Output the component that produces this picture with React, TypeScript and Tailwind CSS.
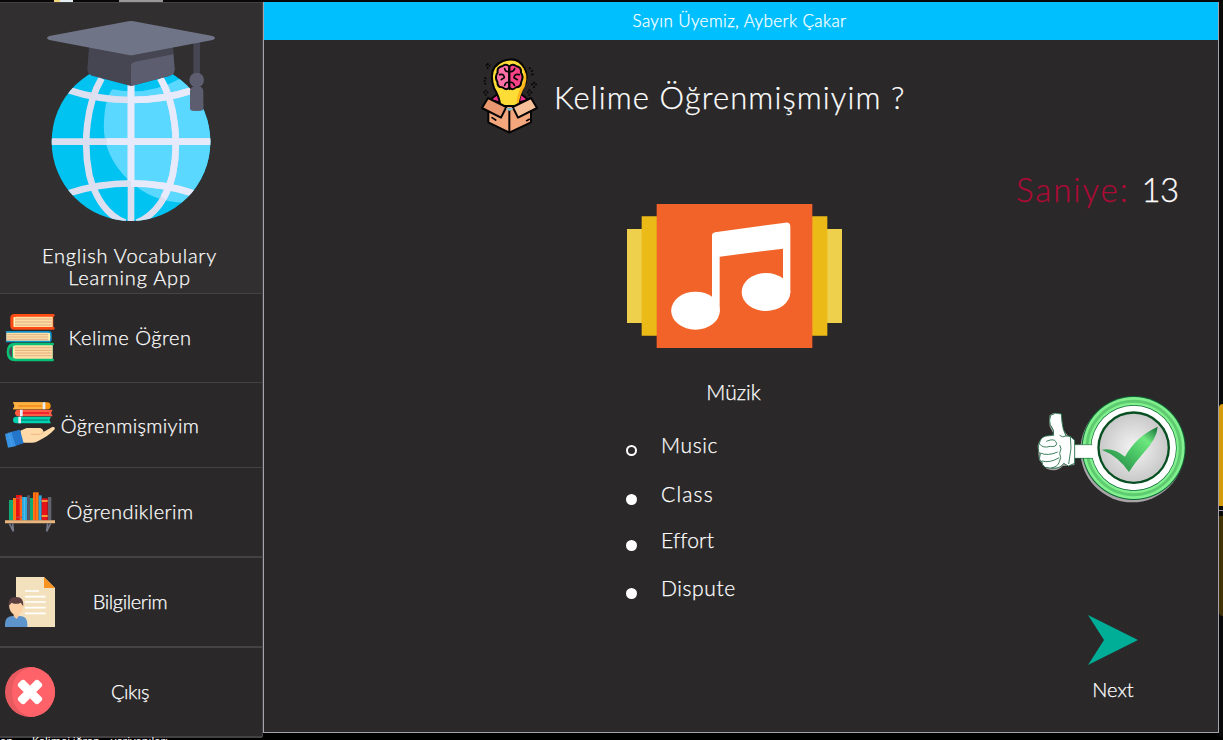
import React from 'react';

function GlobeLogo() {
  return (
    <svg viewBox="0 0 786 690" className="block h-[230px] w-[262px]">
      <defs>
        <clipPath id="globe"><circle cx="393" cy="425" r="238" /></clipPath>
      </defs>
      <circle cx="393" cy="425" r="238" fill="#00c3f2" />
      <g clipPath="url(#globe)">
        <path d="M337 268Q440 290 540 236L640 300V590L560 608Q460 610 385 540C325 480 308 420 312 365Q315 295 337 268Z" fill="#5ad8ff" />
        <g fill="none" stroke="#dcdff0" strokeWidth="20">
          <path d="M150 425H640M393 240V670" />
          <path d="M205 270Q295 300 393 300T580 270M205 580Q295 550 393 550T580 580" />
          <path d="M305 235C260 310 248 430 268 525C285 590 320 645 375 668M481 235C526 310 538 430 518 525C501 590 466 645 411 668" />
        </g>
        <g fill="none" stroke="#e6eafa" strokeWidth="20">
          <path d="M320 425H640M393 240V542M393 300Q491 300 580 270M393 550Q491 550 580 580M481 235C526 310 538 430 518 525Q505 570 490 594" />
        </g>
      </g>
      <path d="M267 140H519L524 208Q524 222 510 227L393 258L276 227Q262 222 262 208Z" fill="#464552" />
      <path d="M393 258V198Q393 188 405 185L520 163L524 208Q524 222 510 227Z" fill="#5d5d70" />
      <path d="M580 125H600V225H580Z" fill="#464552" />
      <path d="M148 108L385 64Q393 62 401 64L638 108Q652 114 638 120L401 165Q393 167 385 165L148 120Q134 114 148 108Z" fill="#707487" />
      <circle cx="590" cy="240" r="22" fill="#5d5d70" />
      <rect x="570" y="259" width="40" height="73" rx="14" fill="#5d5d70" />
      <path d="M570 310H610V324Q610 332 602 332H578Q570 332 570 324Z" fill="#5d5d70" />
    </svg>
  );
}

function BookStackIcon() {
  return (
    <svg viewBox="0 0 150 150" className="size-[50px] shrink-0">
      <g strokeWidth="8" strokeLinecap="round">
        <path d="M145 7H28Q20 7 20 15V38Q20 46 28 46H145" fill="#ff4b14" stroke="#ff4b14" />
        <path d="M143 11H34Q26 11 26 18V35Q26 42 34 42H143Z" fill="#ffdca3" />
        <path d="M4 56H132Q138 56 138 62V78Q138 86 132 86H4" fill="#0a91c9" stroke="#1193c8" strokeWidth="4" />
        <path d="M4 59H130Q136 60 136 71T130 83H4Z" fill="#ffe1ac" />
        <path d="M143 93H30Q9 93 9 117T30 141H143" fill="#08c177" stroke="#08c177" />
        <path d="M143 97H31Q24 100 24 117T31 137H143Z" fill="#ffdca3" />
      </g>
      <path d="M21 100V134Q12 127 12 117T21 100Z" fill="#4c4656" />
      <path d="M30 18H140M30 27H140M30 36H140M6 65H130M6 72H130M6 79H130M30 104H140M30 112H140M30 120H140M30 128H140" stroke="#d9a77c" strokeWidth="2.5" />
      <path d="M28 12V42M133 60V83M27 98V136" stroke="#fff3b8" strokeWidth="4" />
    </svg>
  );
}

function HandBooksIcon() {
  return (
    <svg viewBox="0 0 150 150" className="size-[50px] shrink-0">
      <path d="M24 7H127Q137 8 137 18T127 28H24L29 18Z" fill="#ff9811" />
      <path d="M24 7H112V28H24L29 18Z" fill="#ffb244" />
      <path d="M143 29H40Q30 30 30 39T40 49H143L138 39Z" fill="#ff5b45" />
      <path d="M24 60Q24 50 35 50H138L133 60L138 70H35Q24 70 24 60Z" fill="#00d1ae" />
      <path d="M40 18H110" stroke="#f08512" strokeWidth="4" />
      <path d="M52 39H132" stroke="#e80b24" strokeWidth="4" />
      <path d="M45 60H130" stroke="#038a80" strokeWidth="4" />
      <path d="M117 7V28M49 29V49M44 50V70" stroke="#e6edf4" strokeWidth="8" />
      <path d="M46 92L65 84H106Q115 87 115 96L142 81Q151 79 149 88Q130 109 101 122Q92 128 82 128H50Z" fill="#fddaa7" />
      <path d="M78 103H106Q115 102 115 94" fill="none" stroke="#f2b985" strokeWidth="3" />
      <path d="M0 102L21 95L34 138L9 143Z" fill="#3893e4" />
      <path d="M20 95L45 89L56 130L32 137Z" fill="#2476cb" />
      <path d="M11 98L22 140M2 117L17 112" stroke="#4aa5ef" strokeWidth="2" />
    </svg>
  );
}

function ShelfIcon() {
  return (
    <svg viewBox="0 0 150 150" className="size-[50px] shrink-0">
      <path d="M12 39H24V100H12Z" fill="#10a875" />
      <path d="M24 33H33V100H24Z" fill="#ff7813" />
      <path d="M33 24H51V100H33Z" fill="#e51218" />
      <path d="M44 28H51V100H44Z" fill="#ff6514" />
      <path d="M51 30H66V100H51Z" fill="#29a9df" />
      <path d="M58 30V100" stroke="#69cced" strokeWidth="2" />
      <path d="M66 25H75V100H66Z" fill="#515564" />
      <path d="M75 33H84V100H75Z" fill="#10a875" />
      <path d="M84 16H101V100H84Z" fill="#ff7813" />
      <path d="M91 19V100" stroke="#f04918" strokeWidth="3" />
      <path d="M101 25H110V100H101Z" fill="#29a9df" />
      <path d="M110 34H128V100H110Z" fill="#e51218" />
      <path d="M129 30H139V100H129Z" fill="#626471" />
      <path d="M110 42H128M110 87H128" stroke="#ffc33d" strokeWidth="4" />
      <path d="M34 34H50M34 91H50" stroke="#ba4553" strokeWidth="4" />
      <path d="M0 100H150V109H0Z" fill="#e9b57e" />
      <path d="M13 109L25 133L23 109M137 109L125 133L128 109" fill="none" stroke="#75778a" strokeWidth="5" />
    </svg>
  );
}

function ProfileIcon() {
  return (
    <svg viewBox="0 0 150 150" className="size-[50px] shrink-0">
      <path d="M33 0H117L150 33V150H33Z" fill="#f3e1bd" />
      <path d="M117 0L150 33H117Z" fill="#f7931e" />
      <path d="M60 42H102M60 59H122M60 75H122M60 92H122M60 109H122" stroke="#fff" strokeWidth="5" />
      <path d="M0 150V140Q0 117 24 117H44Q67 117 67 142V150Z" fill="#5e94cc" />
      <path d="M26 107H42V117L34 126L26 117Z" fill="#f8c79e" />
      <path d="M12 84Q13 63 34 63T55 84Q56 103 40 115H29Q12 104 12 84Z" fill="#fdd0a5" />
      <path d="M11 87Q8 59 34 60Q57 60 55 88L47 77Q34 84 20 77Z" fill="#5b3e40" />
    </svg>
  );
}

function ExitIcon() {
  return (
    <svg viewBox="0 0 150 150" className="size-[50px] shrink-0">
      <circle cx="75" cy="75" r="75" fill="#e65a60" />
      <path d="M75 0A75 75 0 0 1 75 150Q21 132 21 75T75 0Z" fill="#ff6268" />
      <path d="M47 47L103 103M103 47L47 103" stroke="#fff" strokeWidth="27" />
      <path d="M42 52L52 42M108 52L98 42M42 98L52 108M108 98L98 108" stroke="#fff" strokeWidth="7" strokeLinecap="round" />
    </svg>
  );
}

function IdeaBoxIcon() {
  return (
    <svg viewBox="0 0 195 246" className="h-[82px] w-[65px] shrink-0">
      <g stroke="#050505" strokeWidth="6" strokeLinejoin="round" strokeLinecap="round">
        <path d="M32 135L60 114L72 145ZM149 135L122 114L108 145Z" fill="#e8328c" />
        <path d="M28 160L91 150L156 160V202L91 233L28 202Z" fill="#f4a67c" />
        <path d="M91 162V231" />
        <path d="M64 153Q62 127 45 99Q24 37 72 18Q116 2 136 39Q151 67 133 99Q119 126 119 153Z" fill="#ffdd37" />
        <path d="M125 29Q148 62 125 98Q113 121 113 143L119 148Q122 121 138 94Q151 55 125 29Z" fill="#ffb51b" stroke="none" />
        <path d="M91 35Q82 25 71 33Q53 36 56 53Q46 65 55 80Q55 97 70 97Q83 108 91 97Z" fill="#ff70a7" />
        <path d="M91 35Q100 25 111 33Q128 36 126 53Q135 65 127 80Q126 97 111 97Q100 108 91 97Z" fill="#f94287" />
        <path d="M91 36V103M62 59Q75 55 76 68L67 74M121 59Q106 55 105 68L115 74M77 41Q79 52 91 49Q103 52 107 41M77 91Q79 80 91 82Q103 80 106 91" fill="none" strokeWidth="5" />
        <path d="M27 129L82 156L66 188L9 159Z" fill="#e99870" />
        <path d="M156 129L101 156L117 188L174 159Z" fill="#f8c098" />
        <path d="M39 188L50 195M143 197L151 193" strokeWidth="5" />
      </g>
      <path d="M80 160H104L91 168Z" fill="#7dcce5" />
      <path d="M26 24V30M20 31H25M29 32H34M26 36V42M165 80V86M156 88H162M168 88H174M165 93V99M151 103V108M144 112H149M154 112H160M151 116V122M20 104V109M13 112H18M23 112H28M20 116V122M16 68L22 71M14 77L20 79M16 87L21 85M150 41L155 38M156 50L162 46M157 60L164 57" stroke="#080808" strokeWidth="5" />
    </svg>
  );
}

function MusicPicture() {
  return (
    <svg viewBox="0 0 645 432" className="block h-[144px] w-[215px]">
      <path d="M0 75H645V357H0Z" fill="#efd04d" />
      <path d="M44 37H601V395H44Z" fill="#ebba16" />
      <path d="M89 0H556V432H89Z" fill="#f26329" />
      <g fill="#fff">
        <ellipse cx="205.500" cy="320" rx="73" ry="57" />
        <ellipse cx="417" cy="264" rx="73" ry="57" />
        <path d="M255 93Q255 87 264 85L475 56Q490 54 490 68V267H468V134L278 158V323H255Z" />
      </g>
    </svg>
  );
}

function CorrectBadge() {
  return (
    <svg viewBox="48 27 456 330" className="block h-[110px] w-[152px]">
      <defs>
        <linearGradient id="tick" x1="0" y1="1" x2="1" y2="0">
          <stop offset="0" stopColor="#17753b" />
          <stop offset=".5" stopColor="#4cc767" />
          <stop offset=".75" stopColor="#6ee77e" />
          <stop offset="1" stopColor="#0c6835" />
        </linearGradient>
        <radialGradient id="disc">
          <stop offset="0" stopColor="#f4f4f4" />
          <stop offset="1" stopColor="#c9c9c9" />
        </radialGradient>
      </defs>
      <circle cx="337" cy="196" r="156" fill="#aaa5a9" />
      <circle cx="341" cy="189" r="156" fill="#0d6935" />
      <circle cx="341" cy="189" r="153" fill="#82f08e" />
      <circle cx="341" cy="189" r="140" fill="none" stroke="#5ecb70" strokeWidth="9" />
      <circle cx="341" cy="189" r="129" fill="#0d6b38" />
      <circle cx="341" cy="189" r="127" fill="#fff" />
      <path d="M160 179H238V219H160Z" fill="#fff" />
      <path d="M165 179H217M165 220H217" stroke="#1b7340" strokeWidth="2" />
      <circle cx="341" cy="188" r="109" fill="#064f20" />
      <circle cx="341" cy="188" r="102" fill="url(#disc)" />
      <path d="M245 194Q281 187 315 215Q347 155 413 125Q411 161 371 203Q344 233 327 261Q294 213 245 194Z" fill="url(#tick)" />
      <path d="M89 124Q86 111 89 91Q107 77 124 90L130 136L148 157L163 167V240L128 243Q112 263 80 251L57 224L53 182Q57 158 86 152L101 148Z" fill="#aaa6aa" />
      <g fill="#fff" stroke="#17683d" strokeWidth="2.500">
        <path d="M101 151Q104 135 91 119Q86 108 92 91Q106 80 124 87Q125 115 130 133L138 153L151 154L164 166V235L145 243L131 235Q124 250 96 250L75 247Q65 239 66 231L58 222Q60 213 61 206Q54 203 55 190Q54 180 58 176Q61 151 89 152Z" />
        <path d="M58 176Q68 191 91 184Q108 187 110 176Q107 162 91 165L79 169M61 204Q83 214 113 201M66 228Q89 235 118 218M119 180Q127 190 119 205Q126 217 117 233Q111 247 94 248M151 155L153 190L146 237M119 151Q128 159 138 153" fill="none" />
      </g>
    </svg>
  );
}

const menu = [
  { label: 'Kelime Öğren', icon: <BookStackIcon />, row: 'h-[89px] border-b', text: 'pb-[2px] tracking-[0.5px]' },
  { label: 'Öğrenmişmiyim', icon: <HandBooksIcon />, row: 'h-[85px] border-b', text: 'tracking-[0.35px]' },
  { label: 'Öğrendiklerim', icon: <ShelfIcon />, row: 'h-[90px] border-b-2', text: 'pb-[2px] tracking-[0.45px]' },
  { label: 'Bilgilerim', icon: <ProfileIcon />, row: 'h-[90px] border-b-2', text: 'pb-[2px] tracking-[-0.4px]' },
  { label: 'Çıkış', icon: <ExitIcon />, row: 'h-[90px] border-b-2', text: 'pb-[2px] tracking-[-0.5px]' },
];

const options = [
  { label: 'Music', row: 'h-[49px]', dot: 'border-[2.5px] border-white', text: 'tracking-[0.6px]' },
  { label: 'Class', row: 'h-[46px]', dot: 'bg-white', text: 'tracking-[1.2px]' },
  { label: 'Effort', row: 'h-[48px]', dot: 'bg-white', text: 'tracking-[0.2px]' },
  { label: 'Dispute', row: 'h-[48px]', dot: 'bg-white', text: 'tracking-[0.6px]' },
];

export default function App() {
  return (
    <div className="flex h-[740px] w-[1223px] flex-col overflow-hidden bg-black font-['Lato',sans-serif] font-light text-white [-webkit-text-stroke:0.25px]">
      <div className="flex h-[2px] shrink-0 bg-[#080808] pl-[54px]">
        <div className="w-[6px] bg-[#f0d77a]" />
        <div className="w-[13px] bg-[#e5eef2]" />
        <div className="ml-[46px] w-[44px] bg-[#999]" />
      </div>
      <div className="flex h-[735px] shrink-0">
        <aside className="flex w-[263px] shrink-0 flex-col border-t border-r border-[#444243] bg-[#2a2829]">
          <div className="h-[291px] shrink-0 border-b border-[#444243] bg-[#312f30]">
            <div className="-mt-[3px]"><GlobeLogo /></div>
            <p className="mt-[14px] pr-[3px] text-center text-[20px] leading-[22px] tracking-[0.8px]">
              English Vocabulary<br />Learning App
            </p>
          </div>
          {menu.map((item) => (
            <button key={item.label} className={`flex shrink-0 items-center border-[#444243] pl-[5px] ${item.row}`}>
              {item.icon}
              <span className={`flex-1 pr-[57px] text-center text-[20px] leading-[24px] whitespace-nowrap ${item.text}`}>{item.label}</span>
            </button>
          ))}
        </aside>
        <main className="flex h-[731px] w-[956px] shrink-0 flex-col border-x border-b border-[#a3a2ad] bg-[#2a2829]">
          <header className="flex h-[38px] shrink-0 items-center justify-center bg-[#00bfff] pr-[3px] text-[17px] tracking-[0.4px]">
            Sayın Üyemiz, Ayberk Çakar
          </header>
          <div className="flex h-[110px] shrink-0 items-start pt-[15px] pl-[215px]">
            <IdeaBoxIcon />
            <h1 className="mt-[23px] ml-[10px] text-[31px] leading-[38px] tracking-[1.1px] whitespace-nowrap">Kelime Öğrenmişmiyim ?</h1>
          </div>
          <div className="flex flex-1 justify-between">
            <section className="flex flex-col pt-[54px] pl-[363px]">
              <MusicPicture />
              <p className="mt-[31px] pr-[2px] text-center text-[21px] leading-[26px]">Müzik</p>
              <div className="mt-[27px] flex flex-col">
                {options.map((o) => (
                  <label key={o.label} className={`flex items-start ${o.row}`}>
                    <span className={`mt-[13px] ml-[-1px] size-[11px] rounded-full ${o.dot}`} />
                    <span className={`ml-[24px] text-[21px] leading-[26px] ${o.text}`}>{o.label}</span>
                  </label>
                ))}
              </div>
            </section>
            <aside className="flex w-[202px] flex-col">
              <p className="mt-[19px] flex gap-[12px] text-[33px] leading-[40px] whitespace-nowrap">
                <span className="tracking-[1.9px] text-[#ad0b37]">Saniye:</span>
                <span className="tracking-[-0.5px]">13</span>
              </p>
              <div className="mt-[185px] ml-[20px]"><CorrectBadge /></div>
              <button className="mt-[111px] ml-[72px] flex w-[50px] flex-col items-center">
                <svg viewBox="0 0 50 50" className="size-[50px]"><path d="M0 0L50 25L0 50L16 25Z" fill="#00ad96" /></svg>
                <span className="mt-[11px] text-[20px] leading-[26px]">Next</span>
              </button>
            </aside>
          </div>
        </main>
        <div className="flex w-[4px] flex-col bg-[#090909] pt-[402px]">
          <div className="h-[102px] rounded-tl-[4px] bg-[#d49b0c]" />
          <div className="mt-[4px] h-px bg-[#a3a2ad]" />
          <div className="mt-[5px] h-[100px] rounded-bl-[4px] bg-[#423306]" />
        </div>
      </div>
      <div className="flex h-[3px] shrink-0 items-start gap-[19px] overflow-hidden font-['Noto_Sans',sans-serif] text-[11px] leading-[7px] font-normal whitespace-nowrap [-webkit-text-stroke:0px]">
        <span>an</span><span>Kelimei iğren</span><span className="-ml-[8px]">veriyanıları</span>
      </div>
    </div>
  );
}
